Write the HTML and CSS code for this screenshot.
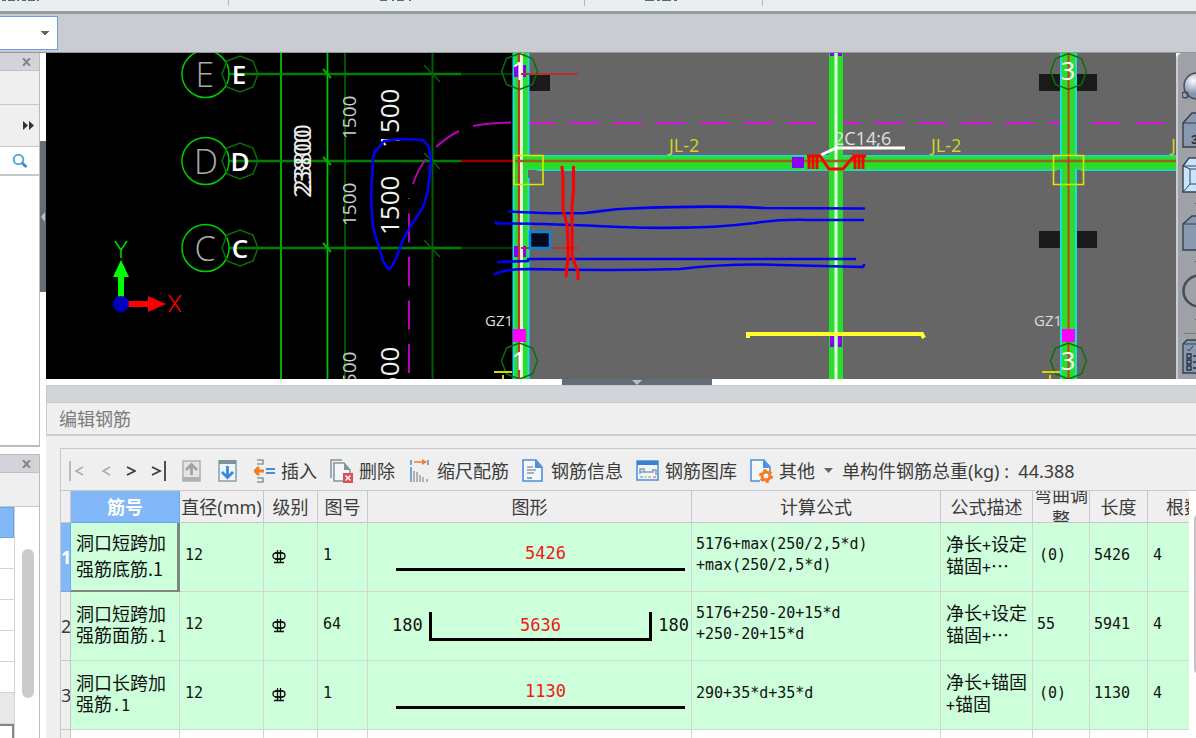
FILE: index.html
```html
<!DOCTYPE html>
<html lang="zh-CN">
<head>
<meta charset="utf-8">
<title>编辑钢筋</title>
<link rel="stylesheet" href="styles.css">
</head>
<body>
<header class="ribbon">
  <svg class="ribbon-art" height="11" width="800" aria-hidden="true">
    <g stroke="#5d6878" stroke-width="2" fill="none">
      <path d="M2 0h40" stroke-dasharray="4 2 7 2 2 3"/>
      <path d="M380 0h34" stroke-dasharray="7 5 2 3" />
      <path d="M645 0h33" stroke-dasharray="9 3 3 2" />
    </g>
    <path d="M228.500 0v6M584.500 0v6M762.500 0v6" stroke="#b4b8bc"/>
  </svg>
</header>
<div class="optionbar"><select class="combo" aria-label="楼层"><option></option></select></div>
<div class="workspace">
  <aside class="sidebar">
    <section class="dock dock-top">
      <div class="dock-head"><button class="close" aria-label="关闭"><svg width="9" height="8"><path d="M1 0l7 8M8 0L1 8" stroke="#858585" stroke-width="2"/></svg></button></div>
      <div class="dock-band"></div>
      <div class="dock-band tall"><button aria-label="展开"><svg width="12" height="9"><path d="M0 0l5 4.500L0 9zM6 0l5 4.500L6 9z" fill="#333"/></svg></button></div>
      <div class="dock-search"><button aria-label="搜索"><svg width="16" height="16"><circle cx="6.500" cy="6.500" r="4.800" fill="none" stroke="#58a9d6" stroke-width="2"/><path d="M10 10l4.500 4" stroke="#3c8fc4" stroke-width="3"/></svg></button></div>
      <div class="dock-fill"></div>
    </section>
    <section class="dock dock-bottom">
      <div class="dock-head"><button class="close" aria-label="关闭"><svg width="9" height="8"><path d="M1 0l7 8M8 0L1 8" stroke="#858585" stroke-width="2"/></svg></button></div>
      <div class="dock-band"></div>
      <div class="list">
        <div class="list-rows"><i class="picked"></i><i></i><i></i><i></i><i></i><i></i><i class="grey"></i><i class="boxed"></i></div>
        <div class="list-scroll"><span></span></div>
      </div>
    </section>
  </aside>
  <div class="vsplit"><button aria-label="收起侧栏"><svg width="6" height="10"><path d="M5 0v10L1 5z" fill="#b9bec3"/></svg></button></div>
  <main class="content">
    <div class="view">
      <svg class="cad" viewBox="46 53 1130 326" preserveAspectRatio="xMinYMin slice" role="img" aria-label="结构平面图">
        <defs><path id="oct" d="M-18 0L-13-13L0-18L13-13L18 0L13 13L0 18L-13 13Z" fill="none" stroke="#087008" stroke-width="1.500"/></defs>
        <rect x="46" y="53" width="483" height="326" fill="#000"/>
        <rect x="528" y="53" width="700" height="326" fill="#666"/>
        <g stroke-width="2" fill="none">
          <path d="M281 53v326M327.500 53v326" stroke="#00c800" stroke-width="1.700"/>
          <path d="M345 53v326" stroke="#005400"/>
          <path d="M432.500 53v326" stroke="#006000"/>
          <path d="M229 74h232M229 161h232M229 248h232" stroke="#008200" stroke-width="2.400"/>
          <path d="M461 74h53M461 248h53" stroke="#004000"/>
          <path d="M461 161h54" stroke="#960000" stroke-width="2.400"/>
          <path d="M323 69l8 9M323 157l8 8M323 243l8 9" stroke="#00b000"/>
          <path d="M424 65l16 17M424 153l16 16M424 240l16 17" stroke="#006500" stroke-width="1.500"/>
        </g>
        <g fill="none" stroke="#00cd00" stroke-width="1.500"><circle cx="205.500" cy="74" r="23.500"/><circle cx="205.500" cy="161" r="23.500"/><circle cx="205.500" cy="248" r="23.500"/></g>
        <use href="#oct" x="240" y="74"/><use href="#oct" x="240" y="161"/><use href="#oct" x="240" y="248"/>
        <g class="axis-thin"><text x="205" y="87">E</text><text x="206" y="174">D</text><text x="205" y="261">C</text></g>
        <g class="axis-bold"><text x="239" y="84">E</text><text x="240" y="171">D</text><text x="240" y="258">C</text></g>
        <g class="dim-thin"><text transform="translate(356 139) rotate(-90)">1500</text><text transform="translate(356 226) rotate(-90)">1500</text><text transform="translate(356 395) rotate(-90)">1500</text></g>
        <g class="dim-bold"><text transform="translate(399 148) rotate(-90)">1500</text><text transform="translate(399 235) rotate(-90)">1500</text><text transform="translate(399 406) rotate(-90)">1500</text></g>
        <g class="dim-total"><text transform="translate(311 198) rotate(-90)">23800</text><text transform="translate(311 193) rotate(-90)">23800</text></g>
        <path d="M409 373V198" stroke="#b800b8" stroke-width="2" stroke-dasharray="29 14.500"/>
        <path d="M413 184Q418 169 426 159M436 147Q447 137 459 131M473 126Q486 123 511 122.500" stroke="#b800b8" stroke-width="2" fill="none"/>
        <path d="M526 123H1168" stroke="#dc14dc" stroke-width="2" stroke-dasharray="29 14.540"/>
        <g>
          <path d="M121 302v-36" stroke="#0f0" stroke-width="6"/><path d="M113 277l8-17 8 17z" fill="#0f0"/>
          <path d="M121 304h30" stroke="#f00" stroke-width="6"/><path d="M148 296l18 8-18 8z" fill="#f00"/>
          <circle cx="121" cy="304" r="8" fill="#0000c0"/>
          <path d="M115 241l6 9 6-9M121 250v8" stroke="#00d400" stroke-width="1.600" fill="none"/>
          <path d="M169 295l12 17M181 295l-12 17" stroke="#e00" stroke-width="1.600"/>
        </g>
        <g fill="#1a1a1a"><rect x="529" y="75" width="21" height="16"/><rect x="1039" y="74" width="58" height="17"/><rect x="1039" y="231" width="58" height="17"/></g>
        <path d="M528 163H1228" stroke="#18d8d8" stroke-width="16"/><path d="M528 163H1228" stroke="#2bdd2b" stroke-width="13"/>
        <path d="M521 53v326" stroke="#18dce0" stroke-width="17"/><path d="M521 53v326" stroke="#2bdd2b" stroke-width="13"/>
        <path d="M519 53v326" stroke="#c23c20" stroke-width="2.400"/><path d="M521.500 53v326" stroke="#e5ffe5" stroke-width="2.800"/>
        <path d="M836 53v326" stroke="#2bdd2b" stroke-width="14"/><path d="M836 53v326" stroke="#e5ffe5" stroke-width="3"/>
        <path d="M1068.500 53v326" stroke="#18dce0" stroke-width="17"/><path d="M1068.500 53v326" stroke="#2bdd2b" stroke-width="13"/>
        <path d="M524 156.500h19v12h-19zM1054 157h29v12h-29z" fill="#2bdd2b"/>
        <path d="M515 161H1228" stroke="#95651a" stroke-width="2.500"/>
        <path d="M1068.500 53v326" stroke="#e22810" stroke-width="1.800"/>
        <g fill="#8b00f5"><path d="M514 65h4v12h-4zM523 65h3v12h-3zM514 246h4v11h-4zM523 246h3v11h-3zM792 157h12v11h-12zM830 53h4v3h-4zM838 53h4v3h-4zM830 336h4v11h-4zM838 336h4v11h-4z"/></g>
        <path d="M521 74h57M521 248h57" stroke="#b83030" stroke-width="2"/>
        <rect x="530" y="232" width="20" height="16" fill="#030b17" stroke="#0c7fe8" stroke-width="2.500"/>
        <path d="M528 170h9l-6 8h-3zM1057 170h3v8l-4-3zM1077 170h4l-4 8z" fill="#666"/>
        <path d="M514 155.500h29v29h-29zM1053.500 155.500h30v29h-30z" fill="none" stroke="#dfe600" stroke-width="1.600"/>
        <path d="M513 329h13v13h-13zM1062 329h13v13h-13z" fill="#f0f"/>
        <use href="#oct" x="519.500" y="71.500"/><use href="#oct" x="519.500" y="361"/><use href="#oct" x="1068.500" y="71.500"/><use href="#oct" x="1068.500" y="361"/>
        <g class="grid-no"><text x="519" y="80">1</text><text x="519" y="370">1</text><text x="1068" y="80">3</text><text x="1068" y="370">3</text></g>
        <g class="tag"><text x="485" y="326">GZ1</text><text x="1034" y="326">GZ1</text></g>
        <g class="beam-tag"><text x="669" y="152">JL-2</text><text x="931" y="152">JL-2</text><text x="1171" y="152">J</text></g>
        <text class="note" x="834" y="145">2C14;6</text>
        <path d="M821 155l15-7h69" fill="none" stroke="#fff" stroke-width="3"/>
        <path d="M807 156h13l9 13h14l11-13h12M809 155v14M813 155v14M817 155v14M855 155v14M859 155v14M863 155v14" fill="none" stroke="#f00" stroke-width="3"/>
        <path d="M748 338v-4h174l2 4" fill="none" stroke="#ffff32" stroke-width="4"/>
        <path d="M494 372h18M503 375v4M1042 372h18M1050 375v4" stroke="#d8d800" stroke-width="2"/>
        <g fill="none" stroke="#0000f5" stroke-width="2.600" stroke-linecap="round" stroke-linejoin="round">
          <path d="M376 151l8-10 16-2 23 1 6 7 2 14-3 29-4 15-6 10-8 12-7 13-6 16-6 12-3 1-5-8-5-17-5-17-2-28 2-40 2-9z"/>
          <path d="M509 211.500Q550 214 585 213C605 211 610 209 630 208.500Q710 205 765 208L864 208.500"/>
          <path d="M496 222v1.500Q540 223 620 227Q700 230 755 223Q780 219 810 220H863"/>
          <path d="M498 262l30-1v-2H855"/>
          <path d="M495 274Q505 269 530 269Q610 271 680 269Q730 263 780 265L863 267l1-2"/>
        </g>
        <path d="M562 167l1 9v33l4 16 1 17v15l-2 19M573.500 167v23l-1.500 15v50l3 9 3 8v7" fill="none" stroke="#f00" stroke-width="3" stroke-linejoin="round" stroke-linecap="round"/>
      </svg>
      <nav class="viewtools" aria-label="视图">
        <button class="short" aria-label="动态观察"><svg width="32" height="32"><defs><radialGradient id="ball" cx="35%" cy="30%"><stop stop-color="#fff"/><stop offset="1" stop-color="#8293ad"/></radialGradient></defs><circle cx="15" cy="14" r="13" fill="url(#ball)" stroke="#48515c" stroke-width="1.500"/><ellipse cx="3" cy="23" rx="3" ry="3" fill="none" stroke="#454d57" stroke-width="1.500"/></svg></button>
        <button class="short" aria-label="三维"><svg width="34" height="36"><path d="M1 11L10 1h24v34H1z" fill="#8798af" stroke="#354150" stroke-width="1.400"/><path d="M1 11h33" stroke="#354150"/><text x="9" y="32" class="cube-no">3</text></svg></button>
        <button aria-label="线框"><svg width="34" height="50"><path d="M1 9L7 1h27v34H1z" fill="#c7e4ff" stroke="#354150" stroke-width="1.400"/><path d="M1 9h33M8 12v15L1 35M8 27h26M8 12h26M1 9l7 3" stroke="#354150" fill="none"/><path d="M13 46h6l-3 3z" fill="#333"/></svg></button>
        <button aria-label="俯视"><svg width="34" height="50"><path d="M1 9L10 1h24v34H1z" fill="#8798af" stroke="#354150" stroke-width="1.400"/><path d="M1 9h33" stroke="#354150"/><path d="M13 46h6l-3 3z" fill="#333"/></svg></button>
        <button aria-label="旋转"><svg width="34" height="50"><circle cx="17" cy="18" r="15.500" fill="none" stroke="#424d5a" stroke-width="2.500"/><path d="M13 46h6l-3 3z" fill="#333"/></svg></button>
        <hr>
        <button class="short" aria-label="显示设置"><svg width="34" height="36"><path d="M1 5L5 1h29v33H1z" fill="#8798af" stroke="#354150" stroke-width="1.400"/><path d="M1 5h33M5 10l2 2 4-5" stroke="#354150" fill="none"/><path d="M5 15h4v4H5zM5 21h4v4H5zM5 27h4v4H5zM11 17h5M11 23h5M11 29h5" fill="none" stroke="#26303c" stroke-width="1.300"/></svg></button>
      </nav>
    </div>
    <div class="hsplit"><button aria-label="收起面板"><svg width="10" height="5"><path d="M0 0h10L5 5z" fill="#b9bec3"/></svg></button></div>
    <section class="panel">
      <div class="panel-strip"></div>
      <h1 class="panel-title">编辑钢筋</h1>
      <div class="editor">
        <div class="toolbar">
          <div class="pager">
            <button class="off" aria-label="首条"><svg width="18" height="20"><path d="M2 0v20M15 6L8 10l7 4" fill="none" stroke="currentColor" stroke-width="1.500"/></svg></button>
            <button class="off" aria-label="上一条"><svg width="10" height="20"><path d="M9 6l-7 4 7 4" fill="none" stroke="currentColor" stroke-width="1.500"/></svg></button>
            <button aria-label="下一条"><svg width="10" height="20"><path d="M1 6l8 4-8 4" fill="none" stroke="currentColor" stroke-width="1.800"/></svg></button>
            <button aria-label="末条"><svg width="16" height="20"><path d="M14 0v20M1 6l8 4-8 4" fill="none" stroke="currentColor" stroke-width="1.800"/></svg></button>
          </div>
          <button class="move" aria-label="上移"><svg width="19" height="22"><path d="M1 1h17v20H1z" fill="#e4e4e4" stroke="#b0b0b0" stroke-width="1.500"/><path d="M1 17h17v4H1z" fill="#b0b0b0"/><path d="M9.500 15V5M4 10l5.500-5.500L15 10" fill="none" stroke="#a2a2a2" stroke-width="2.800"/></svg></button>
          <button class="move" aria-label="下移"><svg width="19" height="22"><path d="M1 1h17v20H1z" fill="#eef4fb" stroke="#8b9da8" stroke-width="1.500"/><path d="M1 0h17v4H1z" fill="#7f939e"/><path d="M9.500 6v11M4 12l5.500 5.500L15 12" fill="none" stroke="#3b86d8" stroke-width="2.800"/></svg></button>
          <button><svg width="22" height="24"><path d="M3 1h6v4H3M3 23h6v-4H3" fill="none" stroke="#8b9ba4" stroke-width="1.600"/><path d="M1 12h9M5 8l-4 4 4 4" fill="none" stroke="#f47b20" stroke-width="2.800"/><path d="M12 10h9M12 14h9" stroke="#4b8fdc" stroke-width="2"/></svg>插入</button>
          <button><svg width="24" height="24"><path d="M1 19V1h11" fill="none" stroke="#8195a0" stroke-width="1.500"/><path d="M4 4h10l6 7v11H4z" fill="#f5f7f8" stroke="#8195a0" stroke-width="1.500"/><path d="M14 4l6 7h-6z" fill="#8195a0"/><path d="M13 14h10v10H13z" fill="#d94f55"/><path d="M15.500 16.500l5 5M20.500 16.500l-5 5" stroke="#fff" stroke-width="1.400"/></svg>删除</button>
          <div class="tools">
            <button><svg width="22" height="24"><path d="M1 1v5M1 8v15M18 1v5" stroke="#4b8fdc" stroke-width="1.500"/><path d="M4 3h10" stroke="#f47b20" stroke-width="1.500"/><path d="M12 0l5 3-5 3z" fill="#f47b20"/><path d="M4 12v11M7 13v10M10 16v7M13 18v5M17 20v3" stroke="#94a2ab" stroke-width="1.500"/></svg>缩尺配筋</button>
            <button><svg width="24" height="24"><path d="M1 1h13l6 7v14H1z" fill="#f4f8fc" stroke="#4b8fdc" stroke-width="1.600"/><path d="M13 1l7 8h-7z" fill="#4b8fdc"/><path d="M5 8h6M5 11h9M5 14h7" stroke="#8b9ba4" stroke-width="1.300"/><path d="M5 19h5" stroke="#4b8fdc" stroke-width="1.500"/></svg>钢筋信息</button>
            <button><svg width="24" height="24"><path d="M1 2h21v19H1z" fill="#eef5fc" stroke="#4b8fdc" stroke-width="1.500"/><path d="M1 2h21v4H1z" fill="#3b80d3"/><path d="M4 15v-5h4v3M4 13h13v-3M17 11h3v5" fill="none" stroke="#8b9ba4" stroke-width="1.500"/><path d="M4 18h3" stroke="#4b8fdc"/><path d="M8 18h3" stroke="#f0b020"/><path d="M12 18h3" stroke="#5ab95a"/><path d="M17 18h3" stroke="#d94f55"/></svg>钢筋图库</button>
            <button><svg width="24" height="24"><path d="M10 22H1V1h13l6 7v5" fill="#f4f8fc" stroke="#4b8fdc" stroke-width="1.500"/><path d="M13 1l7 8h-7z" fill="#4b8fdc"/><circle cx="16" cy="17" r="4" fill="none" stroke="#f47b20" stroke-width="3"/><circle cx="16" cy="17" r="6" fill="none" stroke="#f47b20" stroke-width="2" stroke-dasharray="3 3.200"/></svg>其他<svg class="caret" width="9" height="5"><path d="M0 0h9L4.500 5z" fill="#666"/></svg></button>
            <span class="total">单构件钢筋总重(kg)&nbsp;:&nbsp; 44.388</span>
          </div>
        </div>
        <div class="gridwrap">
          <div class="gridview">
          <table class="grid">
            <colgroup><col class="c-no"><col class="c-name"><col class="c-dia"><col class="c-lv"><col class="c-fig"><col class="c-shape"><col><col class="c-desc"><col class="c-adj"><col class="c-len"><col class="c-count"></colgroup>
            <thead><tr><th></th><th class="picked">筋号</th><th>直径(mm)</th><th>级别</th><th>图号</th><th>图形</th><th>计算公式</th><th>公式描述</th><th><div class="clip"><span>弯曲调整</span></div></th><th>长度</th><th class="cut">根数</th></tr></thead>
            <tbody>
              <tr><th class="picked">1</th><td class="name current">洞口短跨加<br>强筋底筋.1</td><td>12</td><td class="lv"><svg width="14" height="14"><path d="M5.500 0v12M8.500 0v12M2 12.500h10M3 9h8M3 3h8" fill="none" stroke="#111" stroke-width="1.300"/><rect x="1" y="3" width="12" height="6" rx="3" fill="none" stroke="#111" stroke-width="1.300"/></svg></td><td>1</td><td class="shape"><div class="bar"><b>5426</b></div></td><td class="formula">5176+max(250/2,5*d)<br>+max(250/2,5*d)</td><td class="desc">净长<i>+</i>设定<br>锚固<i>+</i>⋯</td><td class="adj">(0)</td><td class="tight">5426</td><td>4</td></tr>
              <tr><th>2</th><td class="name">洞口短跨加<br>强筋面筋<i>.1</i></td><td>12</td><td class="lv"><svg width="14" height="14"><path d="M5.500 0v12M8.500 0v12M2 12.500h10M3 9h8M3 3h8" fill="none" stroke="#111" stroke-width="1.300"/><rect x="1" y="3" width="12" height="6" rx="3" fill="none" stroke="#111" stroke-width="1.300"/></svg></td><td>64</td><td class="shape"><div class="hooked"><span>180</span><b>5636</b><span>180</span></div></td><td class="formula">5176+250-20+15*d<br>+250-20+15*d</td><td class="desc">净长<i>+</i>设定<br>锚固<i>+</i>⋯</td><td class="tight">55</td><td class="tight">5941</td><td>4</td></tr>
              <tr><th>3</th><td class="name">洞口长跨加<br>强筋<i>.1</i></td><td>12</td><td class="lv"><svg width="14" height="14"><path d="M5.500 0v12M8.500 0v12M2 12.500h10M3 9h8M3 3h8" fill="none" stroke="#111" stroke-width="1.300"/><rect x="1" y="3" width="12" height="6" rx="3" fill="none" stroke="#111" stroke-width="1.300"/></svg></td><td>1</td><td class="shape"><div class="bar"><b>1130</b></div></td><td class="formula">290+35*d+35*d</td><td class="desc">净长<i>+</i>锚固<br><i>+</i>锚固</td><td class="adj">(0)</td><td class="tight">1130</td><td>4</td></tr>
              <tr class="blank"><th></th><td></td><td></td><td></td><td></td><td></td><td></td><td></td><td></td><td></td><td></td></tr>
            </tbody>
          </table>
          </div>
          <div class="grid-scroll"><span></span></div>
        </div>
      </div>
    </section>
  </main>
</div>
</body>
</html>
```
FILE: styles.css
```css
* { box-sizing: border-box; }
html, body { height: 100%; }
body {
  margin: 0;
  display: flex;
  flex-direction: column;
  overflow: hidden;
  background: #fff;
  color: #3c3c3c;
  font: 18px/24px "Noto Sans", "Noto Sans CJK SC", sans-serif;
}
button { border: 0; padding: 0; margin: 0; background: none; color: inherit; font: inherit; display: flex; align-items: center; }
svg { display: block; flex: none; }
i { font-style: normal; }

.ribbon { height: 14px; flex: none; overflow: hidden; background: #e9eeee; border-bottom: 3px solid #969b9e; }
.optionbar { height: 39px; flex: none; padding-top: 2px; background: #c9ccd1; border-bottom: 1px solid #92969b; }
.combo {
  appearance: none; display: block; width: 58px; height: 34px; border: 1px solid #7199e4; border-left: 0; border-radius: 0;
  background: linear-gradient(#666, #666) 41px 14px / 8px 1px no-repeat, linear-gradient(#666, #666) 42px 15px / 6px 1px no-repeat, linear-gradient(#666, #666) 43px 16px / 4px 1px no-repeat, linear-gradient(#666, #666) 44px 17px / 2px 1px no-repeat, #fff;
}
.workspace { flex: 1; min-height: 0; display: flex; }

.sidebar { width: 40px; flex: none; display: grid; grid-template-rows: minmax(0, 394fr) minmax(0, 284fr); gap: 7px; }
.dock { display: flex; flex-direction: column; min-height: 0; background: #fff; border-right: 1px solid #b9bbbe; overflow: hidden; }
.dock-top { border-bottom: 2px solid #b9bbbe; }
.dock-bottom { border-top: 1px solid #b9bbbe; }
.dock-head { height: 18px; flex: none; background: #d3d4d9; border-bottom: 1px solid #bfc2c6; display: flex; justify-content: flex-end; padding-right: 8px; }
.dock-band { height: 34px; flex: none; background: #efefef; border-bottom: 1px solid #c5c8cb; display: flex; justify-content: flex-end; padding-right: 4px; }
.dock-band.tall { height: 42px; }
.dock-search { height: 29px; flex: none; border-bottom: 2px solid #c5c8cb; display: flex; justify-content: flex-end; padding-right: 11px; }
.list { flex: 1; min-height: 0; display: flex; justify-content: space-between; }
.list-rows { width: 15px; overflow: hidden; border-right: 1px solid #d4d4d4; }
.list-rows i { display: block; height: 31px; border-bottom: 1px solid #d4d4d4; }
.list-rows .picked { background: #82b8f8; border: 1px solid #6aa4e8; border-left: 0; }
.list-rows .grey { background: #e9e9e9; }
.list-rows .boxed { border: 2px solid #858585; border-left: 0; }
.list-scroll { width: 17px; padding: 42px 5px 40px 0; }
.list-scroll span { display: block; height: 100%; border-radius: 6px; background: #cbcbcb; }

.vsplit { width: 6px; flex: none; padding-top: 88px; }
.vsplit button { height: 151px; width: 6px; background: #646e79; }

.content { flex: 1; min-width: 0; display: grid; grid-template-rows: minmax(0, 326fr) 6px minmax(0, 353fr); }
.view { display: flex; min-height: 0; }
.cad { flex: 1; min-width: 0; height: 100%; }
.cad text { font-family: "Open Sans", sans-serif; fill: #e4e4e4; }
.cad .axis-thin text { font-size: 34px; font-weight: 300; text-anchor: middle; fill: #aaa; }
.cad .axis-bold text { font-size: 26px; font-weight: 600; text-anchor: middle; fill: #fff; }
.cad .dim-thin text { font-size: 19px; fill: #ccc; }
.cad .dim-bold text { font-size: 26px; fill: #f2f2f2; }
.cad .dim-total text { font-size: 24px; fill: #eee; }
.cad .grid-no text { font-size: 26px; text-anchor: middle; fill: #fff; }
.cad .tag text { font-size: 15px; fill: #ddd; }
.cad .beam-tag text { font-size: 18px; fill: #d6d622; }
.cad .note { font-size: 18px; fill: #e0e0e0; }

.viewtools { width: 20px; flex: none; overflow: hidden; display: flex; flex-direction: column; padding-top: 12px; background: #9ea1a5; border-left: 2px solid #c9cbce; border-radius: 6px 0 0 0; }
.viewtools button { height: 58px; flex: none; align-items: flex-start; padding: 4px 0 0 4px; }
.viewtools .short { height: 44px; padding-top: 7px; }
.viewtools .short + .short { padding-top: 3px; }
.viewtools hr + .short { padding-top: 0; }
.viewtools hr { width: 100%; margin: 6px 0 0 6px; flex: none; border: 0; border-top: 1px solid #777; height: 6px; }
.viewtools .cube-no { font: bold 13px "Liberation Sans", sans-serif; fill: #26303c; }

.hsplit { display: flex; justify-content: center; }
.hsplit button { width: 150px; height: 6px; margin-left: 32px; background: #646e79; justify-content: center; }

.panel { display: flex; flex-direction: column; min-height: 0; background: #efefef; }
.panel-strip { height: 18px; flex: none; background: #d3d4d9; border: 1px solid #c5c9ce; border-right: 0; }
.panel-title { height: 33px; flex: none; margin: 0; padding-left: 12px; font-size: 18px; line-height: 32px; font-weight: 400; color: #7c7c7c; border-left: 1px solid #ccced3; border-bottom: 2px solid #ccced3; }
.editor { flex: 1; min-height: 0; margin: 12px 0 0 14px; display: flex; flex-direction: column; border: 1px solid #c4c8cb; border-width: 1px 0 0 1px; }
.toolbar, .tools { display: flex; align-items: center; gap: 13px; white-space: nowrap; }
.toolbar { height: 42px; flex: none; padding: 2px 0 0 7px; overflow: hidden; border-bottom: 1px solid #c6c8ca; }
.tools { margin-left: 2px; }
.toolbar button { gap: 5px; flex: none; }
.pager { display: flex; gap: 15px; margin-right: 2px; }
.pager .off { color: #aaa; }
.move { margin-right: 4px; }
.caret { margin: 0 -4px 0 4px; }

.gridwrap { flex: 1; min-height: 0; overflow: hidden; display: flex; background: #fff; }
.gridview { flex: 1; min-width: 0; overflow: hidden; }
.grid { width: 100%; table-layout: fixed; border-collapse: separate; border-spacing: 0; }
.c-no { width: 10px; }
.c-name { width: 109px; }
.c-dia { width: 84px; }
.c-lv { width: 54px; }
.c-fig { width: 50px; }
.c-shape { width: 324px; }
.c-desc { width: 92px; }
.c-adj { width: 57px; }
.c-len { width: 58px; }
.c-count { width: 41px; }
.grid th, .grid td { padding: 0; overflow: hidden; border-right: 1px solid #d3d6d4; border-bottom: 1px solid #d3d6d4; }
.grid th { font-weight: 400; background: #efefef; white-space: nowrap; border-color: #c8c8c8; }
.grid th.picked { background: #82b8f8; color: #fff; font-weight: 700; border-color: #70a8ee; }
.grid thead th { height: 32px; }
.grid th.cut { text-align: left; text-indent: 18px; border-right: 0; }
.grid td:last-child { border-right: 0; }
.clip { height: 31px; display: flex; align-items: center; justify-content: center; overflow: hidden; white-space: normal; }
.grid td { height: 69px; padding: 0 0 4px 5px; background: #ccffda; color: #111; font: 15px/21px "DejaVu Sans Mono", monospace; }
.grid td i { font: 15px/18px "DejaVu Sans Mono", monospace; }
.grid td.name, .grid td.desc { font: 18px/21px "Noto Sans CJK SC", sans-serif; white-space: nowrap; }
.grid td.current { line-height: 26px; border: 2px solid #808580; border-width: 0 3px 2px 0; }
.grid td.lv { padding: 0 0 0 8px; }
.grid td.shape { padding: 0; font-size: 17px; }
.grid td.adj { padding-left: 6px; }
.grid td.tight, .grid td.formula { padding-left: 4px; }
.grid td.formula { white-space: nowrap; }
.shape b { color: #f01818; font-weight: 400; }
.bar { margin: 0 6px 0 28px; padding: 0 0 4px 10px; text-align: center; border-bottom: 3px solid #000; }
.hooked { display: flex; justify-content: space-between; gap: 6px; padding: 0 2px 0 24px; line-height: 26px; }
.hooked b { flex: 1; text-align: center; border: 3px solid #000; border-top: 0; }
.grid .blank td { background: #fff; }
.grid-scroll { width: 7px; flex: none; padding: 23px 0 64px 5px; overflow: hidden; }
.grid-scroll span { display: block; width: 10px; height: 100%; border-radius: 5px; background: #c4c4c4; }
```
